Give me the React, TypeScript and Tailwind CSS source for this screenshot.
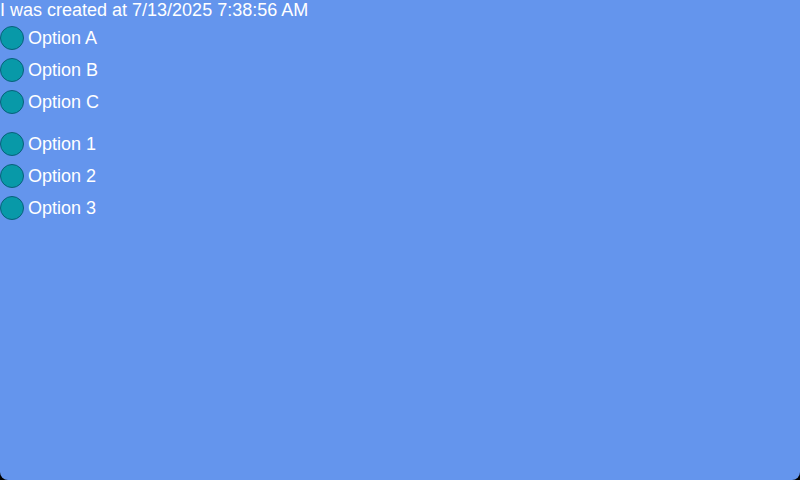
const GROUPS = [
  ['Option A', 'Option B', 'Option C'],
  ['Option 1', 'Option 2', 'Option 3'],
]

function Row({ label }: { label: string }) {
  return (
    <div className="flex items-center h-8">
      <span className="w-6 h-6 rounded-full bg-[#0899a8] border border-[#08607a] shrink-0" />
      <span className="ml-1 text-[18px] leading-5 text-white">{label}</span>
    </div>
  )
}

export default function App() {
  return (
    <div className="w-[800px] h-[480px] bg-black">
      <div
        className="w-full h-full bg-[#6495ed] rounded-b-[8px] overflow-hidden"
        style={{ fontFamily: '"Liberation Sans", Arial, sans-serif' }}
      >
        <div className="h-[21px] text-[18px] leading-[21px] text-white">I was created at 7/13/2025 7:38:56 AM</div>
        <div className="flex flex-col gap-[10px] pt-px">
          {GROUPS.map((g, i) => (
            <div key={i} className="flex flex-col">
              {g.map(l => (
                <Row key={l} label={l} />
              ))}
            </div>
          ))}
        </div>
      </div>
    </div>
  )
}
